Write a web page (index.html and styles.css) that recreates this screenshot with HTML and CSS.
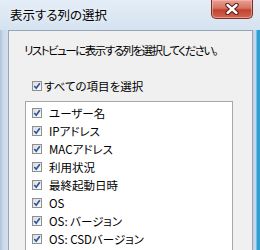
FILE: index.html
```html
<!DOCTYPE html>
<html lang="ja">

<head>
    <meta charset="UTF-8">
    <meta name="viewport" content="width=device-width, initial-scale=1.0">
    <title>表示する列の選択</title>
    <link rel="stylesheet" href="styles.css">
</head>

<body>
    <div class="window">
        <div class="titlebar">
            <span class="title">表示する列の選択</span>
            <button class="close">
                <svg width="16" height="12" viewBox="0 0 16 12">
                    <path d="M3.5 2 L12.5 10 M12.5 2 L3.5 10" stroke="#5a1a14" stroke-width="4.4" stroke-linecap="round" fill="none" />
                    <path d="M3.5 2 L12.5 10 M12.5 2 L3.5 10" stroke="#ffffff" stroke-width="2.4" stroke-linecap="round" fill="none" />
                </svg>
            </button>
        </div>
        <div class="client">
            <p class="prompt">リストビューに表示する列を選択してください。</p>
            <label class="check select-all"><span class="box"></span>すべての項目を選択</label>
            <ul class="list">
                <li class="check"><span class="box"></span>ユーザー名</li>
                <li class="check"><span class="box"></span>IPアドレス</li>
                <li class="check"><span class="box"></span>MACアドレス</li>
                <li class="check"><span class="box"></span>利用状況</li>
                <li class="check"><span class="box"></span>最終起動日時</li>
                <li class="check"><span class="box"></span>OS</li>
                <li class="check"><span class="box"></span>OS: バージョン</li>
                <li class="check"><span class="box"></span>OS: CSDバージョン</li>
            </ul>
        </div>
    </div>
</body>

</html>
```

FILE: styles.css
```css
* {
    margin: 0;
    padding: 0;
    box-sizing: border-box;
}

body {
    width: 260px;
    height: 250px;
    overflow: hidden;
    font-family: "Noto Sans CJK JP", "Noto Sans", sans-serif;
    font-feature-settings: "palt";
    color: #000;
}

.window {
    height: 250px;
    display: flex;
    flex-direction: column;
    background: linear-gradient(to right, #aec2d8 0px, #c9d9eb 3px, #d3e1f0 8px, #d3e1f0 252px, #bdd1e6 253px, #c8dbee 256px, #2c9fd6 257px);
}

.titlebar {
    height: 30px;
    display: flex;
    align-items: flex-start;
    justify-content: space-between;
    background: linear-gradient(to bottom, #e4edf7 0%, #d5e2f0 100%);
    padding: 0 7px 0 10px;
}

.title {
    font-size: 12.5px;
    line-height: 30px;
    text-shadow: 0 0 6px #ffffff;
}

.close {
    width: 42px;
    height: 19px;
    border: 1px solid #7a2f28;
    border-top: none;
    border-radius: 0 0 5px 5px;
    background: linear-gradient(to bottom, #e6a092 0%, #d67463 45%, #c2432f 55%, #d06652 100%);
    display: flex;
    align-items: center;
    justify-content: center;
    box-shadow: inset 0 0 0 1px rgba(255, 200, 190, 0.5);
}

.client {
    flex: 1;
    margin: 0 7px 0 8px;
    background: #f0f0f0;
    border-top: 1px solid #98a7b8;
    border-left: 1px solid #98a7b8;
    border-right: 1px solid #98a7b8;
    padding: 11px 19px 0 15px;
    display: flex;
    flex-direction: column;
}

.prompt {
    font-size: 11.5px;
    line-height: 16px;
    letter-spacing: -1.5px;
    white-space: nowrap;
}

.check {
    display: flex;
    align-items: center;
    font-size: 11.5px;
    line-height: 18px;
    height: 18px;
    flex-shrink: 0;
}

.box {
    width: 10px;
    height: 10px;
    margin-right: 6px;
    border: 1px solid #8e8f8f;
    background:
        url("data:image/svg+xml,%3Csvg xmlns='http://www.w3.org/2000/svg' width='8' height='8' viewBox='0 0 8 8'%3E%3Cpath d='M1.3 4 L3.2 6.2 L6.8 1.2' stroke='%232b56a8' stroke-width='1.7' fill='none'/%3E%3C/svg%3E") center no-repeat,
        linear-gradient(135deg, #dcdcdc, #fbfbfb);
    flex-shrink: 0;
}

.select-all {
    margin: 19px 0 0 8px;
}

.select-all .box {
    margin-right: 2px;
}

.list {
    list-style: none;
    margin: 6px 0 0 1px;
    flex: 1;
    background: #fff;
    border: 1px solid #a7a7a7;
    border-bottom: none;
    padding: 2px 0 0 6px;
}

.list .box {
    margin-right: 7px;
}
```
